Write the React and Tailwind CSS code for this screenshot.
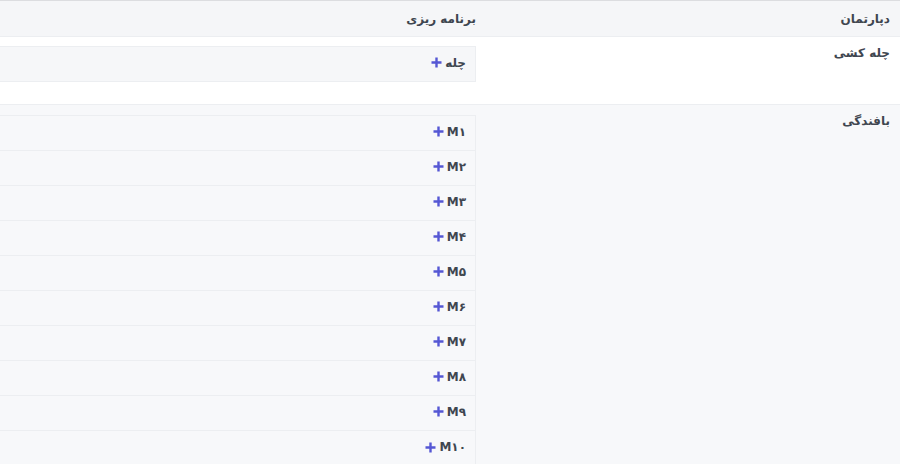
const machines = ["M۱", "M۲", "M۳", "M۴", "M۵", "M۶", "M۷", "M۸", "M۹", "M۱۰"];

const PlusIcon = () => (
  <svg width="11" height="11" viewBox="0 0 11 11" className="shrink-0">
    <path d="M5.5 0.5v10M0.5 5.5h10" stroke="#5557d4" strokeWidth="2.4" />
  </svg>
);

const PlanItem = ({ label, last, h = "h-[35px]" }) => (
  <div
    className={`flex ${h} items-center gap-[3px] pr-[9px] pb-[3px] ${last ? "" : "border-b border-[#eceef1]"}`}
  >
    <span className="font-bold">{label}</span>
    <PlusIcon />
  </div>
);

export default function App() {
  return (
    <div
      dir="rtl"
      className="w-[900px] h-[464px] overflow-hidden bg-[#f7f8fa] font-['DejaVu_Sans',sans-serif] text-[12px] text-[#3f4650]"
    >
      {/* header */}
      <div className="grid h-[37px] grid-cols-[414px_486px] items-center border-t border-b border-t-[#dcdde0] border-b-[#eceef1] bg-[#f5f6f8] font-bold">
        <div className="pr-[10px]">دپارتمان</div>
        <div className="pr-[10px]">برنامه ریزی</div>
      </div>

      {/* row 1 */}
      <div className="grid h-[68px] grid-cols-[414px_486px] border-b border-[#eceef1] bg-white">
        <div className="pr-[10px] pt-[8px] font-bold leading-[16px]">چله کشی</div>
        <div className="pr-[10px] pt-[9px]">
          <div className="ml-[-4px] border border-[#eceef1] bg-[#f6f7f9]">
            <PlanItem label="چله" last h="h-[34px]" />
          </div>
        </div>
      </div>

      {/* row 2 */}
      <div className="grid grid-cols-[414px_486px] bg-[#f7f8fa]">
        <div className="pr-[10px] pt-[8px] font-bold leading-[16px]">بافندگی</div>
        <div className="pr-[10px] pt-[10px]">
          <div className="ml-[-4px] border border-[#eceef1] bg-[#f7f8fa]">
            {machines.map((m, i) => (
              <PlanItem key={m} label={m} last={i === machines.length - 1} />
            ))}
          </div>
        </div>
      </div>
    </div>
  );
}
